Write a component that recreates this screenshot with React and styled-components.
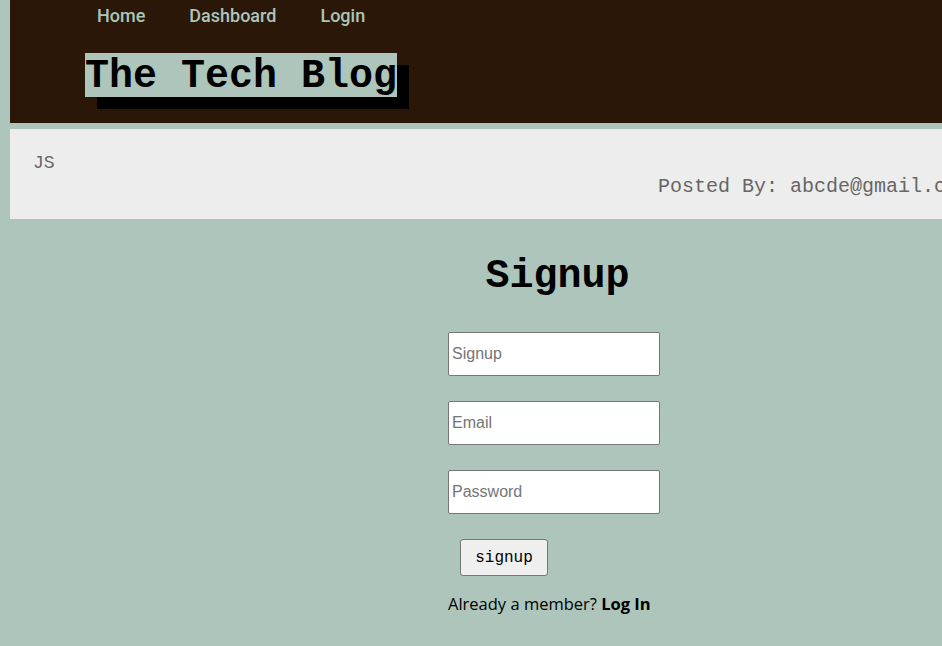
import React from 'react';
import styled, { createGlobalStyle } from 'styled-components';

const GlobalStyle = createGlobalStyle`
  html, body {
    margin: 0;
    padding: 0;
    background: #adc5bb;
    overflow-x: hidden;
  }
  body {
    padding-left: 10px;
    font-family: "Liberation Sans", Arial, sans-serif;
  }
`;

const Header = styled.header`
  background: #2a1708;
  height: 123px;
  width: 1200px;
  box-sizing: border-box;
  padding-left: 87px;
`;

const Nav = styled.nav`
  display: flex;
  gap: 44px;
  height: 30px;
  align-items: center;
`;

const NavLink = styled.a`
  color: #adc5bb;
  font-family: Roboto, "Liberation Sans", sans-serif;
  font-weight: 500;
  font-size: 18px;
  text-decoration: none;
`;

const Title = styled.h1`
  display: inline-block;
  margin: 23px 0 0 -12px;
  background: #adc5bb;
  color: #000;
  font-family: "Liberation Mono", "Courier New", monospace;
  font-weight: 700;
  font-size: 40px;
  line-height: 44px;
  padding-top: 2px;
  height: 44px;
  box-sizing: border-box;
  box-shadow: 12px 12px 0 #000;
`;

const Post = styled.section`
  margin-top: 6px;
  background: #ededed;
  height: 90px;
  width: 1200px;
  box-sizing: border-box;
  padding: 23px 0 0 23px;
  font-family: "Liberation Mono", "Courier New", monospace;
  color: #666;
`;

const Topic = styled.div`
  font-size: 18px;
  line-height: 22px;
`;

const Author = styled.div`
  font-size: 20px;
  line-height: 22px;
  margin: 2px 0 0 625px;
`;

const Main = styled.main`
  display: flex;
  flex-direction: column;
  align-items: center;
  padding-left: 156px;
  padding-top: 36px;
`;

const Heading = styled.h2`
  margin: 0 0 33px;
  padding-left: 7px;
  font-family: "Liberation Mono", "Courier New", monospace;
  font-weight: 700;
  font-size: 40px;
  line-height: 44px;
  color: #000;
`;

const Form = styled.form`
  display: flex;
  flex-direction: column;
  align-items: flex-start;
  width: 212px;
  gap: 25px;
`;

const Input = styled.input`
  width: 212px;
  height: 44px;
  box-sizing: border-box;
  border: 1px solid #767676;
  border-radius: 2px;
  padding: 0 3px;
  font-family: "Liberation Sans", Arial, sans-serif;
  font-size: 16px;
  background: #fff;
  &::placeholder {
    color: #757575;
  }
`;

const Button = styled.button`
  margin-left: 12px;
  width: 88px;
  height: 37px;
  background: #efefef;
  border: 1px solid #767676;
  border-radius: 3px;
  font-family: "Liberation Mono", "Courier New", monospace;
  font-size: 16px;
  color: #000;
`;

const Note = styled.p`
  margin: 18px 0 0;
  width: 212px;
  font-family: "Open Sans", sans-serif;
  font-size: 16.5px;
  line-height: 20px;
  white-space: nowrap;
  color: #000;
  b {
    font-weight: 700;
  }
`;

export default function App() {
  return (
    <>
      <GlobalStyle />
      <Header>
        <Nav>
          <NavLink href="#">Home</NavLink>
          <NavLink href="#">Dashboard</NavLink>
          <NavLink href="#">Login</NavLink>
        </Nav>
        <Title>The Tech Blog</Title>
      </Header>
      <Post>
        <Topic>JS</Topic>
        <Author>Posted By: abcde@gmail.com</Author>
      </Post>
      <Main>
        <Heading>Signup</Heading>
        <Form onSubmit={(e) => e.preventDefault()}>
          <Input placeholder="Signup" />
          <Input placeholder="Email" />
          <Input type="password" placeholder="Password" />
          <Button type="submit">signup</Button>
        </Form>
        <Note>
          Already a member? <b>Log In</b>
        </Note>
      </Main>
    </>
  );
}
